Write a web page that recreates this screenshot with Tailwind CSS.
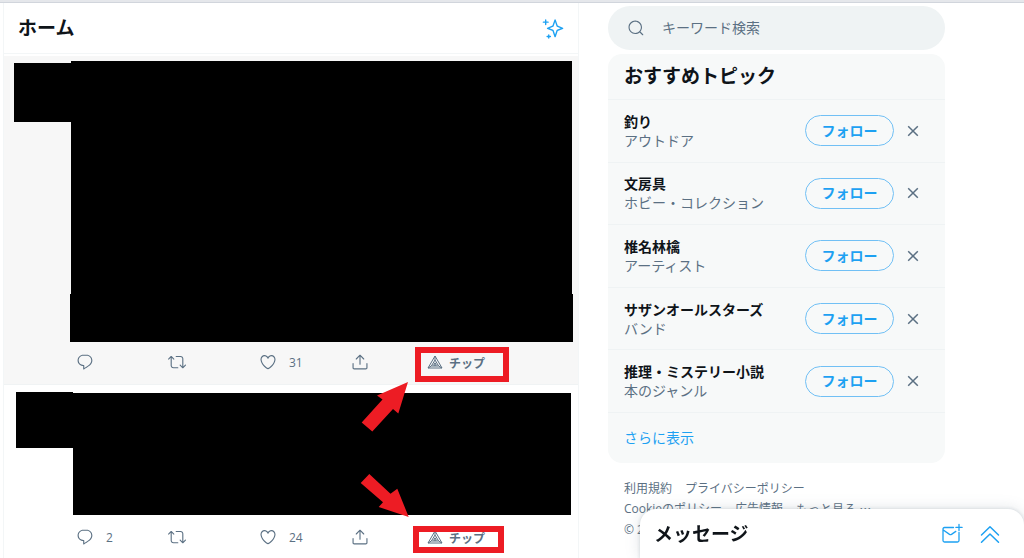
<!DOCTYPE html>
<html lang="ja">
<head>
    <meta charset="UTF-8">
    <meta name="viewport" content="width=device-width, initial-scale=1.0">
    <title>ホーム</title>
    <script src="https://cdn.jsdelivr.net/npm/@tailwindcss/browser@4"></script>
</head>
<body class="min-h-screen overflow-hidden bg-white font-['Open_Sans','Noto_Sans_CJK_JP',sans-serif] text-sm text-[#0f1419]">

  <!-- shared icons -->
  <svg class="hidden" xmlns="http://www.w3.org/2000/svg">
    <symbol id="icon-reply" viewBox="0 0 24 24"><path d="M14.046 2.242l-4.148-.01h-.002c-4.374 0-7.8 3.427-7.8 7.802 0 4.098 3.186 7.206 7.465 7.37v3.828c0 .108.044.286.12.403.142.225.384.347.632.347.138 0 .277-.038.402-.118.264-.168 6.473-4.14 8.088-5.506 1.902-1.61 3.04-3.97 3.043-6.312v-.017c-.006-4.367-3.43-7.787-7.8-7.788zm3.787 12.972c-1.134.96-4.862 3.405-6.772 4.643V16.67c0-.414-.335-.75-.75-.75h-.396c-3.66 0-6.318-2.476-6.318-5.886 0-3.534 2.768-6.302 6.3-6.302l4.147.01h.002c3.532 0 6.3 2.766 6.302 6.296-.003 1.91-.942 3.844-2.514 5.176z"/></symbol>
    <symbol id="icon-retweet" viewBox="0 0 24 24"><path d="M23.77 15.67c-.292-.293-.767-.293-1.06 0l-2.22 2.22V7.65c0-2.068-1.683-3.75-3.75-3.75h-5.85c-.414 0-.75.336-.75.75s.336.75.75.75h5.85c1.24 0 2.25 1.01 2.25 2.25v10.24l-2.22-2.22c-.293-.293-.768-.293-1.06 0s-.294.768 0 1.06l3.5 3.5c.145.147.337.22.53.22s.383-.072.53-.22l3.5-3.5c.294-.292.294-.767 0-1.06zm-10.66 3.28H7.26c-1.24 0-2.25-1.01-2.25-2.25V6.46l2.22 2.22c.148.147.34.22.532.22s.384-.073.53-.22c.293-.293.293-.768 0-1.06l-3.5-3.5c-.293-.294-.768-.294-1.06 0l-3.5 3.5c-.294.292-.294.767 0 1.06s.767.293 1.06 0l2.22-2.22V16.7c0 2.068 1.683 3.75 3.75 3.75h5.85c.414 0 .75-.336.75-.75s-.337-.75-.75-.75z"/></symbol>
    <symbol id="icon-like" viewBox="0 0 24 24"><path d="M12 21.638h-.014C9.403 21.59 1.95 14.856 1.95 8.478c0-3.064 2.525-5.754 5.403-5.754 2.29 0 3.83 1.58 4.646 2.73.814-1.148 2.354-2.73 4.645-2.73 2.88 0 5.404 2.69 5.404 5.755 0 6.376-7.454 13.11-10.037 13.157H12zM7.354 4.225c-2.08 0-3.903 1.988-3.903 4.255 0 5.74 7.034 11.596 8.55 11.658 1.518-.062 8.55-5.917 8.55-11.658 0-2.267-1.823-4.255-3.903-4.255-2.528 0-3.94 2.936-3.952 2.965-.23.562-1.156.562-1.387 0-.014-.03-1.425-2.965-3.954-2.965z"/></symbol>
    <symbol id="icon-share" viewBox="0 0 24 24"><path d="M17.53 7.47l-5-5c-.293-.293-.768-.293-1.06 0l-5 5c-.294.293-.294.768 0 1.06s.767.294 1.06 0l3.72-3.72V15c0 .414.336.75.75.75s.75-.336.75-.75V4.81l3.72 3.72c.146.147.338.22.53.22s.384-.072.53-.22c.293-.293.293-.767 0-1.06z"/><path d="M19.708 21.944H4.292C3.028 21.944 2 20.916 2 19.652V14c0-.414.336-.75.75-.75s.75.336.75.75v5.652c0 .437.355.792.792.792h15.416c.437 0 .792-.355.792-.792V14c0-.414.336-.75.75-.75s.75.336.75.75v5.652c0 1.264-1.028 2.292-2.292 2.292z"/></symbol>
    <symbol id="icon-tip" viewBox="0 0 16 14"><path fill="none" stroke="currentColor" stroke-linejoin="round" d="M8 1L15 13H1zM8 5L11.600 11H4.400zM8 1V5M15 13L11.600 11M1 13L4.400 11M8 7.800L9.300 10.200H6.700z"/></symbol>
    <symbol id="icon-close" viewBox="0 0 12 12"><path fill="none" stroke="currentColor" stroke-width="1.500" d="M1.200 1.200l9.600 9.600M10.800 1.200l-9.600 9.600"/></symbol>
  </svg>

  <div class="h-[3px] border-b border-gray-300 bg-gray-200"></div>

  <div class="flex">
    <main class="ml-[3px] min-w-0 flex-1 border-x border-[#f3f6f7]">
      <header class="mb-[2px] flex h-[51px] items-center justify-between border-b border-[#f3f6f7] pt-[2px] pr-[14px] pl-[14px]">
        <h1 class="text-[19px] font-bold">ホーム</h1>
        <button type="button" aria-label="タイムラインの設定" class="text-[#1da1f2]">
          <svg class="size-[22px]" viewBox="0 0 24 24" fill="currentColor"><path d="M22.772 10.506l-5.618-2.192-2.16-6.5c-.102-.307-.39-.514-.712-.514s-.61.207-.712.513l-2.16 6.5-5.62 2.192c-.287.112-.477.39-.477.7s.19.585.478.698l5.62 2.192 2.16 6.5c.102.306.39.513.712.513s.61-.207.712-.513l2.16-6.5 5.62-2.192c.287-.112.477-.39.477-.7s-.19-.585-.478-.697zm-6.49 2.32c-.208.08-.37.25-.44.46l-1.56 4.695-1.56-4.693c-.07-.21-.23-.38-.438-.462l-4.155-1.62 4.154-1.622c.208-.08.37-.25.44-.462l1.56-4.693 1.56 4.694c.07.212.23.382.438.463l4.155 1.62-4.155 1.622zM6.663 3.812h-1.88V2.05c0-.414-.337-.75-.75-.75s-.75.336-.75.75v1.762H1.5c-.414 0-.75.336-.75.75s.336.75.75.75h1.782v1.762c0 .414.336.75.75.75s.75-.336.75-.75V5.312h1.88c.415 0 .75-.336.75-.75s-.335-.75-.75-.75zm2.535 15.622h-1.1v-1.016c0-.414-.335-.75-.75-.75s-.75.336-.75.75v1.016H5.57c-.414 0-.75.336-.75.75s.336.75.75.75H6.6v1.016c0 .414.335.75.75.75s.75-.336.75-.75v-1.016h1.098c.414 0 .75-.336.75-.75s-.336-.75-.75-.75z"/></svg>
        </button>
      </header>

      <article class="relative border-b border-[#f0f3f4] bg-[#f7f7f7] pt-[5px] pb-[2px]">
        <div class="flex pl-[10px] pr-[6px]">
          <div class="mt-[2px] h-[59px] w-[57px] bg-black"></div>
          <div class="flex-1">
            <div class="h-[233px] bg-black"></div>
            <div class="-mx-px h-12 bg-black"></div>
          </div>
        </div>
        <div class="flex h-10 pl-[72px] text-xs text-[#5b7083]">
          <button type="button" aria-label="返信" class="flex w-[92px] items-center"><svg class="size-[18px]" fill="currentColor"><use href="#icon-reply"/></svg></button>
          <button type="button" aria-label="リツイート" class="flex w-[91px] items-center"><svg class="size-[18px]" fill="currentColor"><use href="#icon-retweet"/></svg></button>
          <button type="button" aria-label="いいね" class="flex w-[92px] items-center gap-3"><svg class="size-[18px]" fill="currentColor"><use href="#icon-like"/></svg><span class="pt-px">31</span></button>
          <button type="button" aria-label="共有" class="flex w-[76px] items-center"><svg class="size-[18px]" fill="currentColor"><use href="#icon-share"/></svg></button>
          <button type="button" class="flex items-center gap-[6px] font-bold"><svg class="h-[14px] w-4" fill="currentColor"><use href="#icon-tip"/></svg><span class="pt-[3px]">チップ</span></button>
        </div>
        <div class="absolute top-[291px] left-[411px] h-[35px] w-[94px] border-6 border-[#ed1c24]"></div>
        <svg class="absolute top-[326px] left-[357px] z-10 h-[50px] w-[48px]" viewBox="0 0 48 50" fill="#ed1c24"><path d="M47 0L16 13.500L21.500 17.500L.7 40.500L11.300 49.500L32 27L37.300 31.500z"/></svg>
      </article>

      <article class="relative bg-white pt-2">
        <div class="flex pl-3 pr-[7px]">
          <div class="-mt-px h-14 w-[57px] bg-black"></div>
          <div class="h-[122px] flex-1 bg-black"></div>
        </div>
        <div class="flex h-11 pl-[72px] text-xs text-[#5b7083]">
          <button type="button" aria-label="返信" class="flex w-[92px] items-center gap-3"><svg class="size-[18px]" fill="currentColor"><use href="#icon-reply"/></svg><span class="pt-px">2</span></button>
          <button type="button" aria-label="リツイート" class="flex w-[91px] items-center"><svg class="size-[18px]" fill="currentColor"><use href="#icon-retweet"/></svg></button>
          <button type="button" aria-label="いいね" class="flex w-[92px] items-center gap-3"><svg class="size-[18px]" fill="currentColor"><use href="#icon-like"/></svg><span class="pt-px">24</span></button>
          <button type="button" aria-label="共有" class="flex w-[76px] items-center"><svg class="size-[18px]" fill="currentColor"><use href="#icon-share"/></svg></button>
          <button type="button" class="flex items-center gap-[6px] font-bold"><svg class="h-[14px] w-4" fill="currentColor"><use href="#icon-tip"/></svg><span class="pt-[3px]">チップ</span></button>
        </div>
        <div class="absolute top-[141px] left-[409px] h-[27px] w-[91px] border-6 border-[#ed1c24]"></div>
        <svg class="absolute top-[89px] left-[356px] z-10 h-11 w-[49px]" viewBox="0 0 49 44" fill="#ed1c24"><path d="M48.700 43L37.300 14.700L30.500 19.700L9.300 0L.7 9L23 28.300L18.700 33z"/></svg>
      </article>
    </main>

    <aside class="w-[445px] pt-[3px] pr-[79px] pl-[29px]">
      <label class="flex h-11 items-center gap-[17px] rounded-full bg-[#eff3f4] pl-[19px] text-[#5b7083]">
        <svg class="size-[18px] shrink-0" viewBox="0 0 24 24" fill="currentColor"><path d="M21.53 20.47l-3.66-3.66C19.195 15.24 20 13.214 20 11c0-4.97-4.03-9-9-9s-9 4.03-9 9 4.03 9 9 9c2.215 0 4.24-.804 5.808-2.13l3.66 3.66c.147.146.34.22.53.22s.385-.073.53-.22c.295-.293.295-.767.002-1.06zM3.5 11c0-4.135 3.365-7.500 7.500-7.500s7.500 3.365 7.500 7.500-3.365 7.500-7.500 7.500-7.500-3.365-7.500-7.500z"/></svg>
        <input type="search" aria-label="キーワード検索" placeholder="キーワード検索" class="min-w-0 flex-1 bg-transparent outline-none placeholder:text-[#5b7083]">
      </label>

      <section class="mt-1 overflow-hidden rounded-[14px] bg-[#f7f9f9]">
        <h2 class="flex h-[46px] items-center border-b border-[#eff3f4] pl-4 text-[19px] font-bold">おすすめトピック</h2>
        <ul class="grid min-h-[313px] auto-rows-fr">
          <li class="flex items-center border-b border-[#eff3f4] pr-[26px] pl-4">
            <div class="flex-1 leading-[19px]">
              <p class="font-bold">釣り</p>
              <p class="text-[#5b7083]">アウトドア</p>
            </div>
            <button type="button" class="h-[31px] w-[89px] rounded-full border border-[#71c0f5] font-bold text-[#1da1f2]">フォロー</button>
            <button type="button" aria-label="閉じる" class="ml-[13px] text-[#5b7083]"><svg class="size-3"><use href="#icon-close"/></svg></button>
          </li>
          <li class="flex items-center border-b border-[#eff3f4] pr-[26px] pl-4">
            <div class="flex-1 leading-[19px]">
              <p class="font-bold">文房具</p>
              <p class="text-[#5b7083]">ホビー・コレクション</p>
            </div>
            <button type="button" class="h-[31px] w-[89px] rounded-full border border-[#71c0f5] font-bold text-[#1da1f2]">フォロー</button>
            <button type="button" aria-label="閉じる" class="ml-[13px] text-[#5b7083]"><svg class="size-3"><use href="#icon-close"/></svg></button>
          </li>
          <li class="flex items-center border-b border-[#eff3f4] pr-[26px] pl-4">
            <div class="flex-1 leading-[19px]">
              <p class="font-bold">椎名林檎</p>
              <p class="text-[#5b7083]">アーティスト</p>
            </div>
            <button type="button" class="h-[31px] w-[89px] rounded-full border border-[#71c0f5] font-bold text-[#1da1f2]">フォロー</button>
            <button type="button" aria-label="閉じる" class="ml-[13px] text-[#5b7083]"><svg class="size-3"><use href="#icon-close"/></svg></button>
          </li>
          <li class="flex items-center border-b border-[#eff3f4] pr-[26px] pl-4">
            <div class="flex-1 leading-[19px]">
              <p class="font-bold">サザンオールスターズ</p>
              <p class="text-[#5b7083]">バンド</p>
            </div>
            <button type="button" class="h-[31px] w-[89px] rounded-full border border-[#71c0f5] font-bold text-[#1da1f2]">フォロー</button>
            <button type="button" aria-label="閉じる" class="ml-[13px] text-[#5b7083]"><svg class="size-3"><use href="#icon-close"/></svg></button>
          </li>
          <li class="flex items-center border-b border-[#eff3f4] pr-[26px] pl-4">
            <div class="flex-1 leading-[19px]">
              <p class="font-bold">推理・ミステリー小説</p>
              <p class="text-[#5b7083]">本のジャンル</p>
            </div>
            <button type="button" class="h-[31px] w-[89px] rounded-full border border-[#71c0f5] font-bold text-[#1da1f2]">フォロー</button>
            <button type="button" aria-label="閉じる" class="ml-[13px] text-[#5b7083]"><svg class="size-3"><use href="#icon-close"/></svg></button>
          </li>
        </ul>
        <a href="#" class="flex h-[50px] items-center pl-4 text-[#1da1f2]">さらに表示</a>
      </section>

      <footer class="mt-4 pl-4 text-xs leading-5 text-[#5b7083]">
        <div class="flex gap-[13px]"><a href="#">利用規約</a><a href="#">プライバシーポリシー</a></div>
        <div class="flex gap-[13px]"><a href="#">Cookieのポリシー</a><a href="#">広告情報</a><a href="#">もっと見る <span class="font-['Noto_Sans_CJK_JP']">⋯</span></a></div>
        <p>© 2</p>
      </footer>
    </aside>
  </div>

  <!-- message drawer -->
  <section class="fixed right-0 bottom-0 flex h-[49px] w-96 items-center rounded-t-2xl bg-white pr-[23px] pl-[14px] shadow-[0_0_15px_rgba(101,119,134,0.2),0_0_3px_1px_rgba(101,119,134,0.15)]">
    <h2 class="flex-1 pt-[3px] text-[19px] font-bold">メッセージ</h2>
    <button type="button" aria-label="新しいメッセージ" class="mr-4 text-[#1da1f2]">
      <svg class="size-[22px]" viewBox="0 0 22 22" fill="none" stroke="currentColor" stroke-width="1.300" stroke-linecap="round"><path d="M12.500 4.500H3.500Q2 4.500 2 6V17.500Q2 19 3.500 19H16.500Q18 19 18 17.500V9.500M2.300 7L8.500 11.400Q9.500 12 10.500 11.400L14.800 8.400M18 1.300V7.500M14.900 4.400H21.100"/></svg>
    </button>
    <button type="button" aria-label="開く" class="text-[#1da1f2]">
      <svg class="size-[22px]" viewBox="0 0 22 22" fill="none" stroke="currentColor" stroke-width="1.500" stroke-linecap="round" stroke-linejoin="round"><path d="M2.500 12L11 3.700L19.500 12M2.500 19.300L11 11L19.500 19.300"/></svg>
    </button>
  </section>
</body>
</html>
